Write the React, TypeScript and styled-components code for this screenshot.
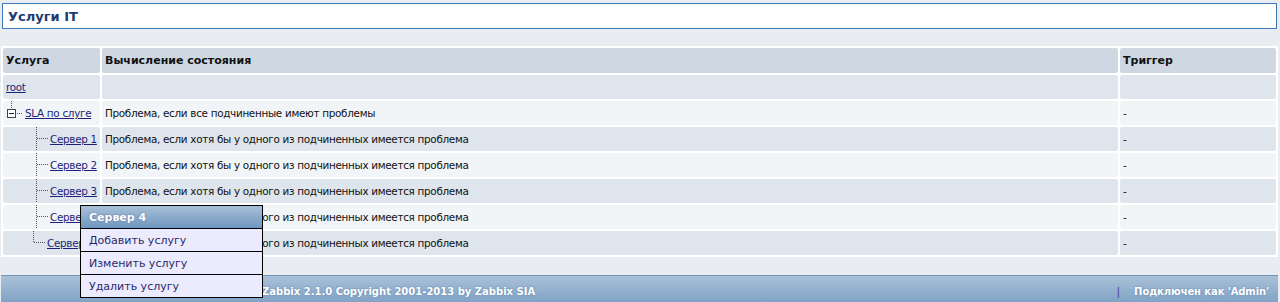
import styled, { createGlobalStyle } from 'styled-components';

const GlobalStyle = createGlobalStyle`
  body {
    margin: 0;
    background: #e9edf1;
    font-family: "DejaVu Sans", Verdana, sans-serif;
    font-size: 11px;
    color: #1a1a1a;
  }
`;

const Page = styled.div`
  position: relative;
  width: 1280px;
  height: 302px;
  overflow: hidden;
  padding-top: 3px;
  box-sizing: border-box;
`;

const TitleBar = styled.div`
  margin: 0 3px 0 2px;
  height: 24px;
  background: #ffffff;
  border: 1px solid #3d78b6;
  display: flex;
  align-items: center;
  padding-left: 5px;
  font-size: 13px;
  font-weight: 700;
  color: #1e3a72;
`;

const Table = styled.table`
  margin: 17px 2px 0 1px;
  width: 1277px;
  background: #ffffff;
  border-collapse: separate;
  border-spacing: 2px;
  table-layout: fixed;
`;

const Th = styled.th<{ $w?: number }>`
  width: ${(p) => (p.$w ? `${p.$w}px` : 'auto')};
  height: 25px;
  padding: 0 3px;
  background: #cfd8e2;
  border-radius: 2px;
  text-align: left;
  font-weight: 700;
  color: #111;
`;

const Td = styled.td<{ $shade: 'dark' | 'light' }>`
  height: 24px;
  padding: 0 3px;
  background: ${(p) => (p.$shade === 'dark' ? '#dfe5ec' : '#f1f5f8')};
  border-radius: 2px;
  font-size: 10.4px;
  letter-spacing: -0.3px;
  color: #111;
  white-space: nowrap;
  overflow: hidden;
`;

const TreeCell = styled.div`
  display: flex;
  align-items: center;
  height: 24px;
  & svg {
    flex-shrink: 0;
  }
`;

const Link = styled.a<{ $gap?: number }>`
  color: #1d1f78;
  text-decoration: underline;
  margin-left: ${(p) => p.$gap ?? 2}px;
  cursor: pointer;
  flex-shrink: 0;
`;

const Footer = styled.div`
  position: absolute;
  left: 1px;
  right: 2px;
  top: 275px;
  height: 30px;
  border-top: 1px solid #6f93bb;
  background: linear-gradient(#a9c1d8, #7b9ec3);
  display: flex;
  align-items: center;
  font-size: 10px;
  font-weight: 700;
  color: #ffffff;
  text-shadow: 0 0 2px #5a7ca3;
`;

const Copyright = styled.span`
  margin-left: 261px;
  flex: 1;
`;

const Divider = styled.span`
  color: #5a4fa8;
  margin-right: 14px;
  text-shadow: none;
`;

const Connected = styled.span`
  margin-right: 9px;
  letter-spacing: -0.1px;
`;

const Menu = styled.div`
  position: absolute;
  left: 80px;
  top: 205px;
  width: 181px;
  border: 1px solid #000;
  background: #ebebfd;
`;

const MenuTitle = styled.div`
  height: 22px;
  display: flex;
  align-items: center;
  padding-left: 8px;
  background: linear-gradient(#a8c0d8, #6f96c0);
  font-weight: 700;
  color: #fff;
  text-shadow: 0 0 2px #4e6f95;
  border-bottom: 1px solid #000;
`;

const MenuItem = styled.div`
  height: 22px;
  display: flex;
  align-items: center;
  padding-left: 8px;
  font-size: 11px;
  color: #2a2a6a;
  & + & {
    border-top: 1px solid #000;
  }
`;

type Kind = 'open' | 'branch' | 'last';

function TreeGlyph({ kind }: { kind: Kind }) {
  const dot = { stroke: '#555', strokeWidth: 1, strokeDasharray: '1 1' };
  if (kind === 'open') {
    return (
      <svg width={17} height={24}>
        <line x1={5.5} y1={0} x2={5.5} y2={8} {...dot} />
        <rect x={1.5} y={8.5} width={8} height={8} fill="#fff" stroke="#444" />
        <line x1={3} y1={12.5} x2={8} y2={12.5} stroke="#222" />
        <line x1={11} y1={12.5} x2={16} y2={12.5} {...dot} />
      </svg>
    );
  }
  if (kind === 'branch') {
    return (
      <svg width={42} height={24}>
        <line x1={30.5} y1={0} x2={30.5} y2={24} {...dot} />
        <line x1={31} y1={11.5} x2={42} y2={11.5} {...dot} />
      </svg>
    );
  }
  return (
    <svg width={39} height={24}>
      <line x1={27.5} y1={0} x2={27.5} y2={12} {...dot} />
      <line x1={28} y1={11.5} x2={39} y2={11.5} {...dot} />
    </svg>
  );
}

const rows: { name: string; kind: Kind; rule: string }[] = [
  { name: 'SLA по слуге', kind: 'open', rule: 'Проблема, если все подчиненные имеют проблемы' },
  { name: 'Сервер 1', kind: 'branch', rule: 'Проблема, если хотя бы у одного из подчиненных имеется проблема' },
  { name: 'Сервер 2', kind: 'branch', rule: 'Проблема, если хотя бы у одного из подчиненных имеется проблема' },
  { name: 'Сервер 3', kind: 'branch', rule: 'Проблема, если хотя бы у одного из подчиненных имеется проблема' },
  { name: 'Сервер 4', kind: 'branch', rule: 'Проблема, если хотя бы у одного из подчиненных имеется проблема' },
  { name: 'Сервер 5', kind: 'last', rule: 'Проблема, если хотя бы у одного из подчиненных имеется проблема' },
];

export default function App() {
  return (
    <Page>
      <GlobalStyle />
      <TitleBar>Услуги IT</TitleBar>

      <Table>
        <thead>
          <tr>
            <Th $w={91}>Услуга</Th>
            <Th>Вычисление состояния</Th>
            <Th $w={150}>Триггер</Th>
          </tr>
        </thead>
        <tbody>
          <tr>
            <Td $shade="dark">
              <Link $gap={0}>root</Link>
            </Td>
            <Td $shade="dark" />
            <Td $shade="dark" />
          </tr>
          {rows.map((r, i) => {
            const shade = i % 2 === 0 ? 'light' : 'dark';
            return (
              <tr key={r.name}>
                <Td $shade={shade}>
                  <TreeCell>
                    <TreeGlyph kind={r.kind} />
                    <Link>{r.name}</Link>
                  </TreeCell>
                </Td>
                <Td $shade={shade}>{r.rule}</Td>
                <Td $shade={shade}>-</Td>
              </tr>
            );
          })}
        </tbody>
      </Table>

      <Footer>
        <Copyright>Zabbix 2.1.0 Copyright 2001-2013 by Zabbix SIA</Copyright>
        <Divider>|</Divider>
        <Connected>Подключен как 'Admin'</Connected>
      </Footer>

      <Menu>
        <MenuTitle>Сервер 4</MenuTitle>
        <MenuItem>Добавить услугу</MenuItem>
        <MenuItem>Изменить услугу</MenuItem>
        <MenuItem>Удалить услугу</MenuItem>
      </Menu>
    </Page>
  );
}
